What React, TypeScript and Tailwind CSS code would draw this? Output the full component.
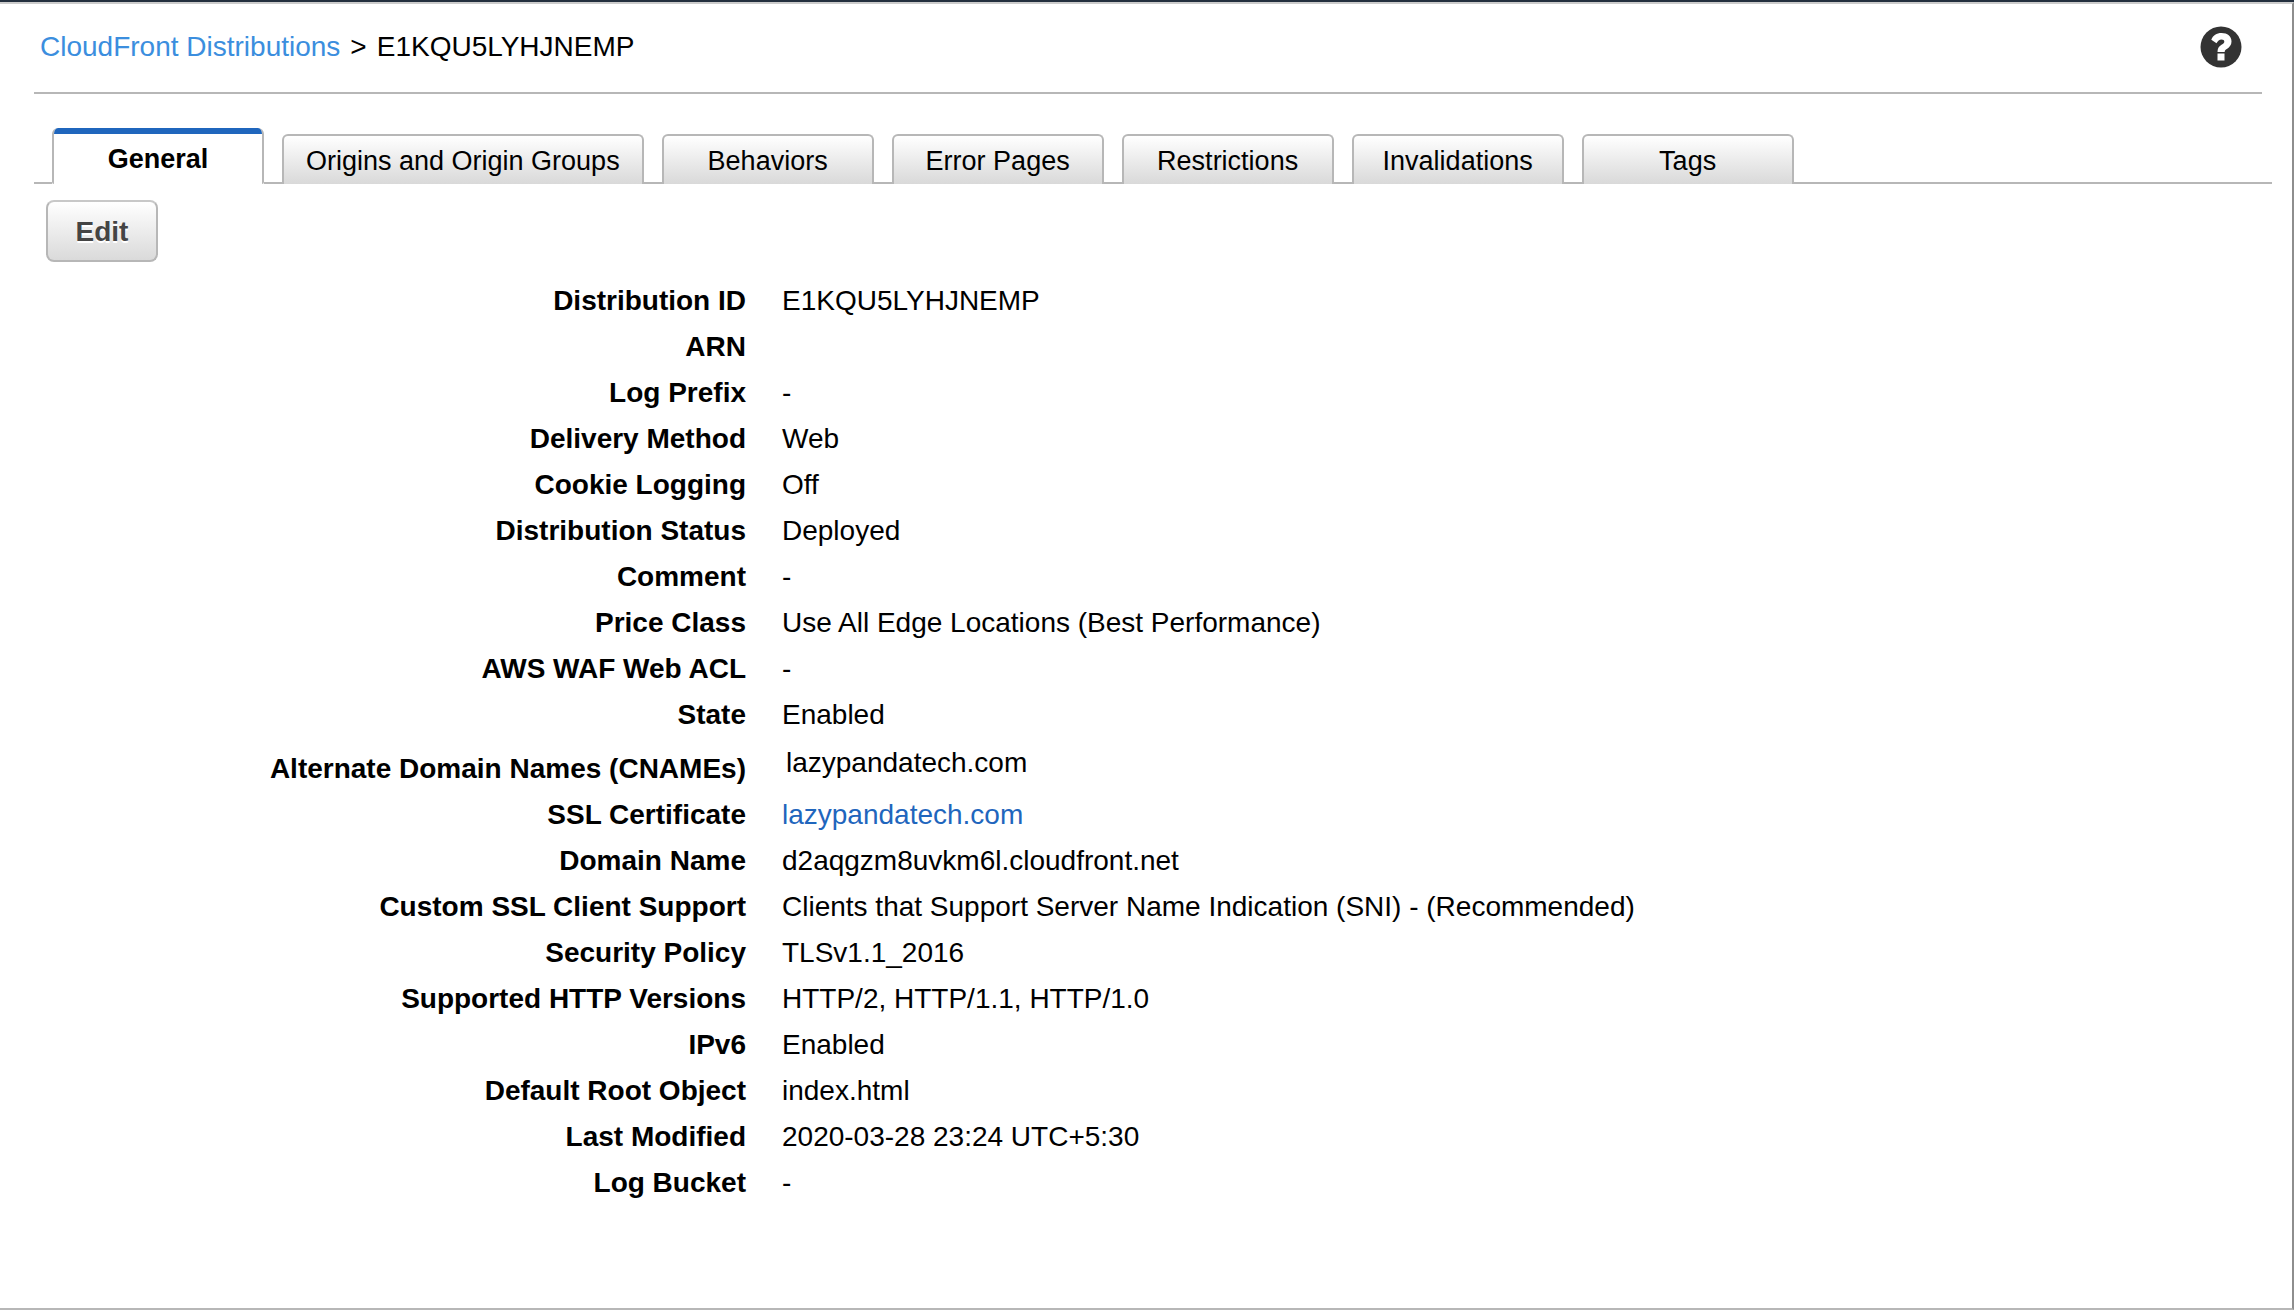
const tabs = [
  'Origins and Origin Groups',
  'Behaviors',
  'Error Pages',
  'Restrictions',
  'Invalidations',
  'Tags',
];

type Detail = { label: string; value: string; kind?: 'link' | 'list' };

const details: Detail[] = [
  { label: 'Distribution ID', value: 'E1KQU5LYHJNEMP' },
  { label: 'ARN', value: '' },
  { label: 'Log Prefix', value: '-' },
  { label: 'Delivery Method', value: 'Web' },
  { label: 'Cookie Logging', value: 'Off' },
  { label: 'Distribution Status', value: 'Deployed' },
  { label: 'Comment', value: '-' },
  { label: 'Price Class', value: 'Use All Edge Locations (Best Performance)' },
  { label: 'AWS WAF Web ACL', value: '-' },
  { label: 'State', value: 'Enabled' },
  { label: 'Alternate Domain Names (CNAMEs)', value: 'lazypandatech.com', kind: 'list' },
  { label: 'SSL Certificate', value: 'lazypandatech.com', kind: 'link' },
  { label: 'Domain Name', value: 'd2aqgzm8uvkm6l.cloudfront.net' },
  {
    label: 'Custom SSL Client Support',
    value: 'Clients that Support Server Name Indication (SNI) - (Recommended)',
  },
  { label: 'Security Policy', value: 'TLSv1.1_2016' },
  { label: 'Supported HTTP Versions', value: 'HTTP/2, HTTP/1.1, HTTP/1.0' },
  { label: 'IPv6', value: 'Enabled' },
  { label: 'Default Root Object', value: 'index.html' },
  { label: 'Last Modified', value: '2020-03-28 23:24 UTC+5:30' },
  { label: 'Log Bucket', value: '-' },
];

function HelpIcon() {
  return (
    <svg viewBox="0 0 42 42" className="size-[42px]" aria-hidden="true">
      <circle cx="21" cy="21" r="20.5" fill="#333" />
      <path
        d="M11.300 13.800C13 9.300 16.500 7 21.500 7C27.500 7 31.500 10.200 31.500 15.500C31.500 19 29.500 21.200 27.200 22.700C25.200 23.900 24.700 24.500 24.700 26H17.500C17.500 22.500 18.500 20.500 21.500 18.700C23.500 17.500 24.300 16.800 24.300 15.500C24.300 14.200 23.300 13.500 21.500 13.500C19.300 13.500 17.800 14.800 16.500 17.300Z"
        fill="#fff"
      />
      <rect x="17.500" y="27.500" width="7" height="7" fill="#fff" />
    </svg>
  );
}

function DetailRow({ label, value, kind }: Detail) {
  return (
    <tr>
      <th scope="row" className={kind === 'list' ? 'pt-2 text-right font-bold' : 'text-right font-bold'}>
        {label}
      </th>
      <td className={kind === 'list' ? 'pt-0.5 pl-10 align-top' : 'pl-9'}>
        {kind === 'link' ? (
          <a href="#certificate" className="text-[#1f66bd]">
            {value}
          </a>
        ) : (
          value
        )}
      </td>
    </tr>
  );
}

export default function App() {
  return (
    <div className="flex min-h-screen flex-col border-t-2 border-[#232f3e] bg-white pb-0.5 font-['Liberation_Sans',Arial,sans-serif] text-[28px] leading-[46px] text-black">
      <div className="flex grow flex-col border-t-2 border-r-2 border-b-2 border-t-[#ccc] border-r-[#8e8e8e] border-b-[#b7b7b7]">
        <header className="mr-[30px] ml-[34px] flex h-[90px] items-start justify-between border-b-2 border-[#b7b7b7] pt-5 pr-5 pl-1.5">
          <nav aria-label="Breadcrumb" className="flex gap-2.5">
            <a href="#distributions" className="text-[#3b8ede]">
              CloudFront Distributions
            </a>
            <span>&gt;</span>
            <span>E1KQU5LYHJNEMP</span>
          </nav>
          <button type="button" aria-label="Help" className="mt-0.5">
            <HelpIcon />
          </button>
        </header>

        <div role="tablist" className="mt-[34px] mr-5 ml-[34px] flex h-14 items-end text-[27px]">
          <span className="w-[18px] border-b-2 border-[#b7b7b7]" />
          <button
            type="button"
            role="tab"
            aria-selected="true"
            className="h-14 w-[212px] overflow-hidden rounded-t-md rounded-b-xs border-x-2 border-[#b7b7b7] bg-white font-bold"
          >
            <span className="block h-full border-t-6 border-[#1f66bd] leading-[50px]">General</span>
          </button>
          {tabs.map((tab) => (
            <div key={tab} className="flex items-end">
              <span className="w-[18px] border-b-2 border-[#b7b7b7]" />
              <button
                type="button"
                role="tab"
                aria-selected="false"
                className="h-[50px] min-w-[212px] rounded-t-md border-2 border-b-0 border-[#b7b7b7] bg-linear-to-b from-white to-[#d9d9d9] px-[22px] pt-0.5"
              >
                {tab}
              </button>
            </div>
          ))}
          <span className="grow border-b-2 border-[#b7b7b7]" />
        </div>

        <main className="px-[46px] pt-4 pb-10">
          <button
            type="button"
            className="block h-[62px] w-28 rounded-lg border-2 border-[#b7b7b7] border-t-[#c8c8c8] bg-linear-to-b from-white to-[#dadada] pt-0.5 font-bold text-[#444] text-shadow-[0_2px_0_#fff]"
          >
            Edit
          </button>
          <table className="mt-4">
            <colgroup>
              <col className="w-[700px]" />
              <col />
            </colgroup>
            <tbody>
              {details.map((detail) => (
                <DetailRow key={detail.label} {...detail} />
              ))}
            </tbody>
          </table>
        </main>
      </div>
    </div>
  );
}
